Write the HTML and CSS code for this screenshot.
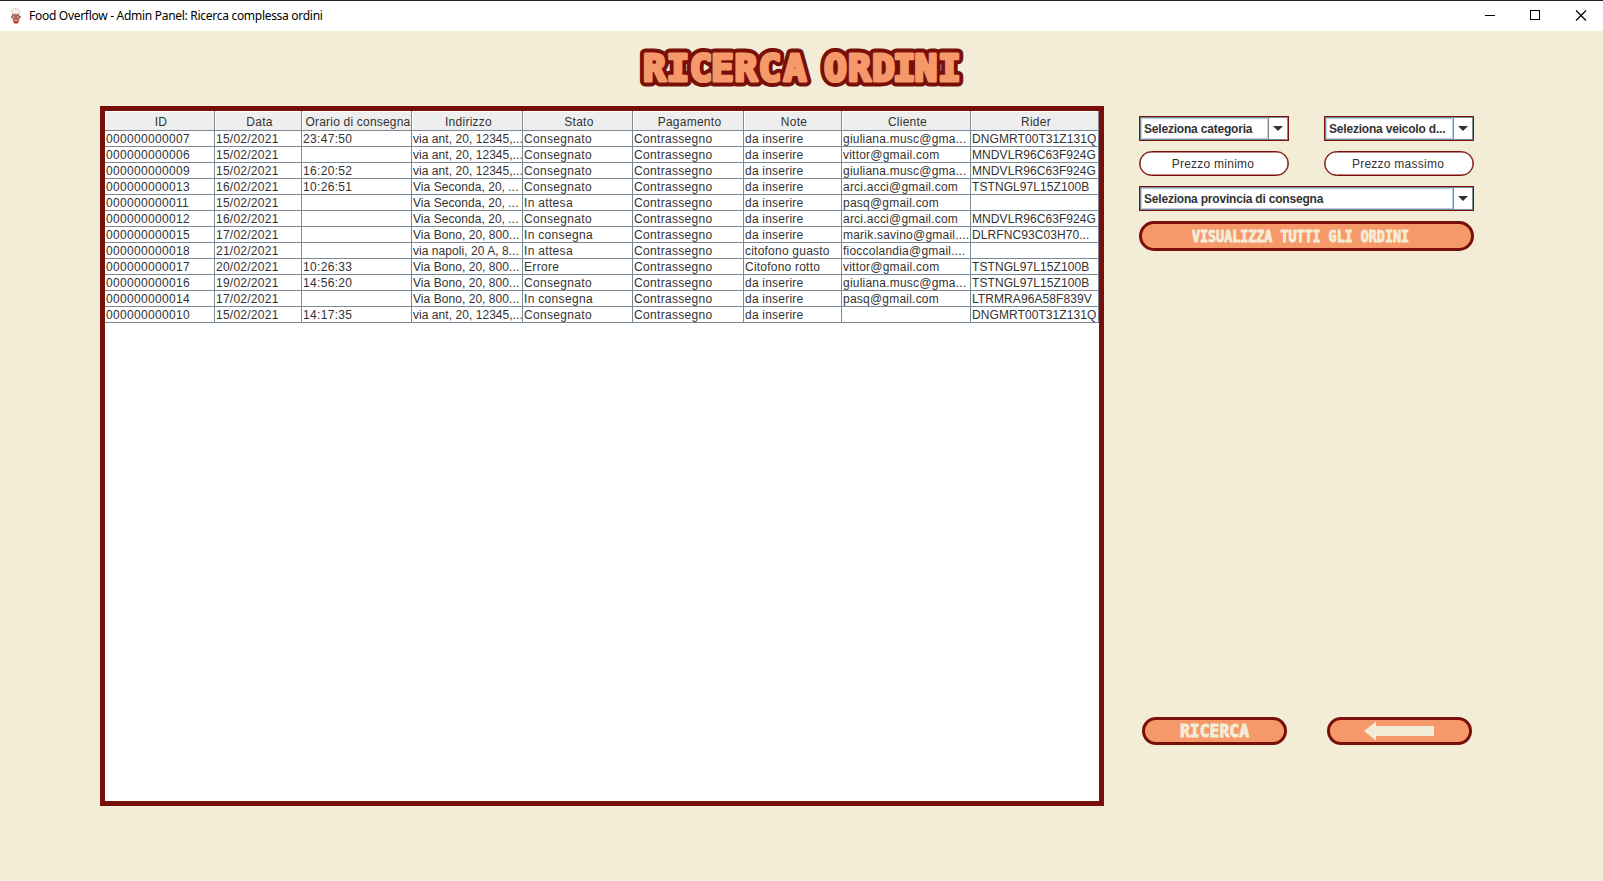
FILE: index.html
```
<!DOCTYPE html>
<html lang="it">
<head>
<meta charset="utf-8">
<title>Food Overflow - Admin Panel: Ricerca complessa ordini</title>
<link rel="stylesheet" href="styles.css">
</head>
<body>
<header class="titlebar">
  <svg class="app-icon" width="16" height="16" viewBox="0 0 16 16">
    <path d="M4.500 6L3 3L5 1L8 .5L11 1.500L12 4L11 6Z" fill="#f6efec" stroke="#b39a94" stroke-width=".9" stroke-dasharray="1 1"/>
    <path d="M4 6.500H11.500L12.500 9L11 13L8 14L5 13L3 9Z" fill="#d9a595"/>
    <path d="M4 7H11M3 9H5M10 9H13M6 9H9" stroke="#7a3026" stroke-width="1.100"/>
    <path d="M5 11H11" stroke="#8a3a2c" stroke-width="1.200"/>
    <path d="M4.500 12.500L8 13.500L11.500 12.500L9.500 15.500H6.500Z" fill="#c4261a"/>
  </svg>
  <span class="window-title">Food Overflow - Admin Panel: Ricerca complessa ordini</span>
  <svg class="window-buttons" width="138" height="30" viewBox="0 0 138 30" fill="none" stroke="#000" shape-rendering="crispEdges">
    <path d="M20 14.500H30"/>
    <rect x="65.500" y="9.500" width="9" height="9"/>
    <path d="M111 9.500L121 19.500M121 9.500L111 19.500" shape-rendering="auto" stroke-width="1.200"/>
  </svg>
</header>
<main class="content">
  <h1 class="heading">
    <svg width="345" height="50" viewBox="630 40 345 50">
      <text class="logo-text logo-outline" y="81" x="654.500 678 701 722.500 746 770 795 815 835.500 859.500 883.500 904.500 926 949.500">RICERCA ORDINI</text>
      <text class="logo-text logo-fill" y="81" x="654.500 678 701 722.500 746 770 795 815 835.500 859.500 883.500 904.500 926 949.500">RICERCA ORDINI</text>
    </svg>
  </h1>
  <div class="columns">
    <section class="orders">
      <table class="grid">
        <colgroup><col class="c110"><col class="c87"><col class="c110"><col class="c111"><col class="c110"><col class="c111"><col class="c98"><col class="c129"><col class="c128"></colgroup>
        <thead><tr><th>ID</th><th>Data</th><th class="tight">Orario di consegna</th><th>Indirizzo</th><th>Stato</th><th>Pagamento</th><th>Note</th><th>Cliente</th><th>Rider</th></tr></thead>
        <tbody>
          <tr><td>000000000007</td><td>15/02/2021</td><td>23:47:50</td><td>via ant, 20, 12345,...</td><td>Consegnato</td><td>Contrassegno</td><td>da inserire</td><td>giuliana.musc@gma...</td><td>DNGMRT00T31Z131Q</td></tr>
          <tr><td>000000000006</td><td>15/02/2021</td><td></td><td>via ant, 20, 12345,...</td><td>Consegnato</td><td>Contrassegno</td><td>da inserire</td><td>vittor@gmail.com</td><td>MNDVLR96C63F924G</td></tr>
          <tr><td>000000000009</td><td>15/02/2021</td><td>16:20:52</td><td>via ant, 20, 12345,...</td><td>Consegnato</td><td>Contrassegno</td><td>da inserire</td><td>giuliana.musc@gma...</td><td>MNDVLR96C63F924G</td></tr>
          <tr><td>000000000013</td><td>16/02/2021</td><td>10:26:51</td><td>Via Seconda, 20, ...</td><td>Consegnato</td><td>Contrassegno</td><td>da inserire</td><td>arci.acci@gmail.com</td><td>TSTNGL97L15Z100B</td></tr>
          <tr><td>000000000011</td><td>15/02/2021</td><td></td><td>Via Seconda, 20, ...</td><td>In attesa</td><td>Contrassegno</td><td>da inserire</td><td>pasq@gmail.com</td><td></td></tr>
          <tr><td>000000000012</td><td>16/02/2021</td><td></td><td>Via Seconda, 20, ...</td><td>Consegnato</td><td>Contrassegno</td><td>da inserire</td><td>arci.acci@gmail.com</td><td>MNDVLR96C63F924G</td></tr>
          <tr><td>000000000015</td><td>17/02/2021</td><td></td><td>Via Bono, 20, 800...</td><td>In consegna</td><td>Contrassegno</td><td>da inserire</td><td>marik.savino@gmail....</td><td>DLRFNC93C03H70...</td></tr>
          <tr><td>000000000018</td><td>21/02/2021</td><td></td><td>via napoli, 20 A, 8...</td><td>In attesa</td><td>Contrassegno</td><td>citofono guasto</td><td>fioccolandia@gmail....</td><td></td></tr>
          <tr><td>000000000017</td><td>20/02/2021</td><td>10:26:33</td><td>Via Bono, 20, 800...</td><td>Errore</td><td>Contrassegno</td><td>Citofono rotto</td><td>vittor@gmail.com</td><td>TSTNGL97L15Z100B</td></tr>
          <tr><td>000000000016</td><td>19/02/2021</td><td>14:56:20</td><td>Via Bono, 20, 800...</td><td>Consegnato</td><td>Contrassegno</td><td>da inserire</td><td>giuliana.musc@gma...</td><td>TSTNGL97L15Z100B</td></tr>
          <tr><td>000000000014</td><td>17/02/2021</td><td></td><td>Via Bono, 20, 800...</td><td>In consegna</td><td>Contrassegno</td><td>da inserire</td><td>pasq@gmail.com</td><td>LTRMRA96A58F839V</td></tr>
          <tr><td>000000000010</td><td>15/02/2021</td><td>14:17:35</td><td>via ant, 20, 12345,...</td><td>Consegnato</td><td>Contrassegno</td><td>da inserire</td><td></td><td>DNGMRT00T31Z131Q</td></tr>
        </tbody>
      </table>
    </section>
    <aside class="panel">
      <div class="filters">
        <div class="combo"><span class="combo-value">Seleziona categoria</span><span class="combo-arrow"></span></div>
        <div class="combo"><span class="combo-value">Seleziona veicolo d...</span><span class="combo-arrow"></span></div>
        <div class="field">Prezzo minimo</div>
        <div class="field">Prezzo massimo</div>
        <div class="combo wide"><span class="combo-value">Seleziona provincia di consegna</span><span class="combo-arrow"></span></div>
        <button class="pill show-all wide">
          <svg width="220" height="20"><text class="button-text small" x="1" y="15.500" textLength="217" lengthAdjust="spacingAndGlyphs">VISUALIZZA TUTTI GLI ORDINI</text></svg>
        </button>
      </div>
      <div class="actions">
        <button class="pill">
          <svg width="72" height="20"><text class="button-text" x="1" y="16" textLength="69" lengthAdjust="spacingAndGlyphs">RICERCA</text></svg>
        </button>
        <button class="pill">
          <svg width="72" height="20"><path d="M0 10L12 .5V5H70V15H12V19.500Z" fill="#f3ecd7"/></svg>
        </button>
      </div>
    </aside>
  </div>
</main>
</body>
</html>
```
FILE: styles.css
```
* { box-sizing: border-box; }
body {
  margin: 0;
  width: 1603px;
  height: 881px;
  overflow: hidden;
  background: #f3ecd7;
  color: #333;
  font: 12px/15px "Liberation Sans", Arial, sans-serif;
}
.titlebar {
  height: 31px;
  padding-left: 8px;
  display: flex;
  align-items: center;
  background: #fff;
  border-top: 1px solid #222;
}
.window-title {
  margin-left: 5px;
  color: #000;
  font: 12px/16px "Noto Sans", "Open Sans", sans-serif;
  letter-spacing: -.29px;
}
.window-buttons { margin-left: auto; margin-right: 0; }
.content { padding: 9px 0 0 100px; }
.heading { margin: 0 0 0 530px; height: 66px; }
.heading svg { display: block; }
.logo-text {
  font: bold 38px "DejaVu Sans Mono", monospace;
  text-anchor: middle;
  stroke-linejoin: round;
}
.logo-outline { fill: #780f09; stroke: #780f09; stroke-width: 11px; }
.logo-fill { fill: #f5996a; stroke: #f5996a; stroke-width: 3.2px; }
.columns { display: flex; gap: 35px; }
.orders {
  width: 1004px;
  height: 700px;
  border: 5px solid #780f09;
  background: #fff;
}
.grid { width: 994px; table-layout: fixed; border-collapse: separate; border-spacing: 0; }
.c87 { width: 87px; }
.c98 { width: 98px; }
.c110 { width: 110px; }
.c111 { width: 111px; }
.c128 { width: 128px; }
.c129 { width: 129px; }
.grid th {
  height: 20px;
  padding: 3px 0 0 3px;
  background: #eee;
  border-right: 1px solid #7a8a99;
  border-bottom: 1px solid #7a8a99;
  box-shadow: inset 1px 1px #fff;
  font-weight: normal;
  line-height: 15px;
  letter-spacing: .25px;
  white-space: nowrap;
}
.grid th.tight { letter-spacing: .2px; }
.grid td {
  height: 16px;
  padding: 1px 0 0 1px;
  border-right: 1px solid #7a8a99;
  border-bottom: 1px solid #7a8a99;
  line-height: 14px;
  letter-spacing: .32px;
  white-space: nowrap;
}
.grid td:nth-child(2) { letter-spacing: .25px; }
.grid td:nth-child(4) { letter-spacing: .05px; }
.grid td:nth-child(7) { letter-spacing: .22px; }
.grid td:nth-child(8) { letter-spacing: .22px; }
.grid td:last-child { letter-spacing: .08px; }
.panel {
  width: 335px;
  padding-top: 10px;
  display: flex;
  flex-direction: column;
}
.filters { display: grid; grid-template-columns: 150px 150px; column-gap: 35px; row-gap: 10px; }
.wide { grid-column: span 2; }
.combo {
  height: 25px;
  display: flex;
  border: 1px solid #780f09;
  background: #fff;
  box-shadow: inset 0 0 0 1px #7a8a99;
  font-weight: bold;
  letter-spacing: -.2px;
}
.combo-value {
  flex: 1;
  margin: 1px 0 1px 1px;
  padding-left: 2px;
  border: 1px solid #b8cfe5;
  line-height: 20px;
  white-space: nowrap;
}
.combo-arrow {
  width: 20px;
  padding-right: 2px;
  border-left: 1px solid #7a8a99;
  display: flex;
  align-items: center;
  justify-content: center;
}
.combo-arrow::before {
  content: "";
  border: 5px solid transparent;
  border-top-color: #333;
  border-bottom: 0;
}
.field {
  height: 25px;
  padding: 1px 2px 0 0;
  border: 1px solid #780f09;
  border-radius: 13px;
  background: #fff;
  box-shadow: inset 0 0 0 .6px #780f09;
  line-height: 23px;
  text-align: center;
  letter-spacing: .25px;
}
.pill {
  width: 145px;
  height: 28px;
  padding: 0;
  display: flex;
  align-items: center;
  justify-content: center;
  border: 3px solid #780f09;
  border-radius: 15px;
  background: #f5996a;
}
.show-all { width: 335px; height: 30px; padding-right: 11px; }
.button-text {
  font: bold 17px "DejaVu Sans Mono", monospace;
  fill: #f3ecd7;
  stroke: #f3ecd7;
  stroke-width: 1px;
  stroke-linejoin: round;
}
.small { font-size: 15px; }
.actions { margin: 466px 0 0 3px; display: flex; gap: 40px; }
```
